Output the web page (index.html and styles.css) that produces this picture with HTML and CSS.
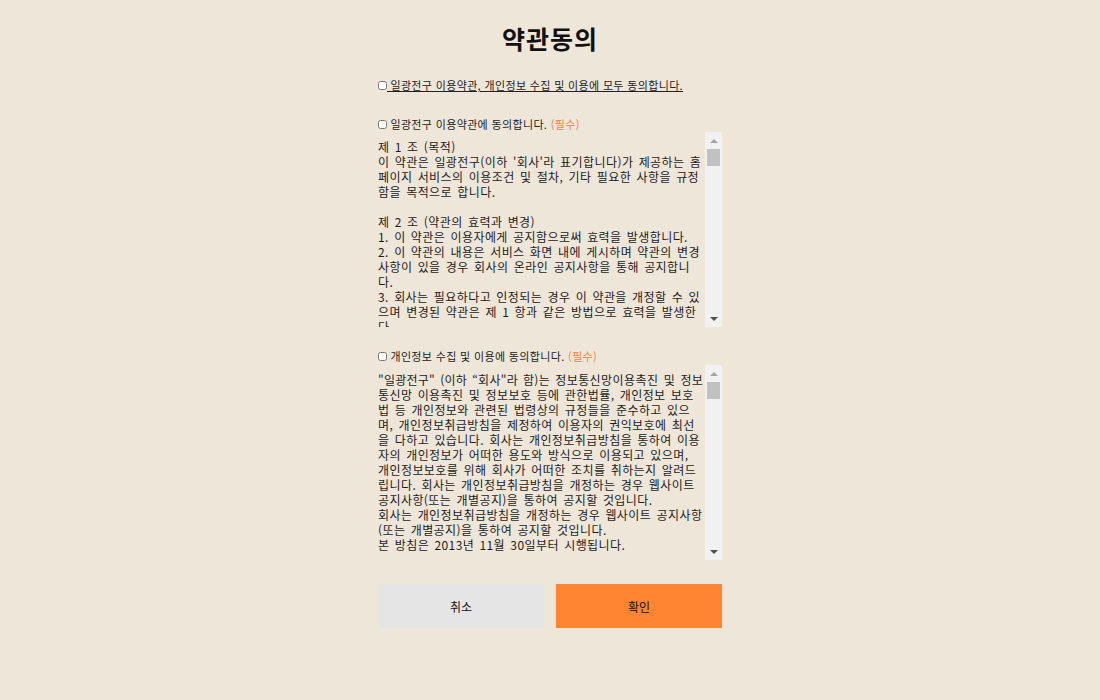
FILE: index.html
```html
<!DOCTYPE html>
<html lang="ko">
<head>
<meta charset="utf-8">
<title>약관동의</title>
<link rel="stylesheet" href="styles.css">
</head>
<body>
<div class="wrap">
  <h1 class="title">약관동의</h1>

  <label class="check all"><input type="checkbox"><span class="ul">&nbsp;일광전구 이용약관, 개인정보 수집 및 이용에 모두 동의합니다.</span></label>

  <label class="check row2"><input type="checkbox"><span>&nbsp;일광전구 이용약관에 동의합니다. <em class="req">(필수)</em></span></label>
  <div class="box">
    <div class="terms">제 1 조 (목적)
이 약관은 일광전구(이하 '회사'라 표기합니다)가 제공하는 홈페이지 서비스의 이용조건 및 절차, 기타 필요한 사항을 규정함을 목적으로 합니다.

제 2 조 (약관의 효력과 변경)
1. 이 약관은 이용자에게 공지함으로써 효력을 발생합니다.
2. 이 약관의 내용은 서비스 화면 내에 게시하며 약관의 변경사항이 있을 경우 회사의 온라인 공지사항을 통해 공지합니다.
3. 회사는 필요하다고 인정되는 경우 이 약관을 개정할 수 있으며 변경된 약관은 제 1 항과 같은 방법으로 효력을 발생한다.

제 3 조 (약관 외 준칙)
이 약관에 명시되지 않은 사항은 관계법령 및 서비스별 안내의 규정에 따릅니다.</div>
    <div class="sb" aria-hidden="true">
      <span class="sb-btn"><svg width="8" height="4" viewBox="0 0 8 4"><polygon points="0,4 8,4 4,0" fill="#a3a3a3"/></svg></span>
      <span class="sb-track"><span class="sb-thumb"></span></span>
      <span class="sb-btn"><svg width="8" height="4" viewBox="0 0 8 4"><polygon points="0,0 8,0 4,4" fill="#505050"/></svg></span>
    </div>
  </div>

  <label class="check row3"><input type="checkbox"><span>&nbsp;개인정보 수집 및 이용에 동의합니다. <em class="req">(필수)</em></span></label>
  <div class="box">
    <div class="terms"><span class="lead">"일광전구" (이하 “회사"라 함)는</span> 정보통신망이용촉진 및 정보통신망 이용촉진 및 정보보호 등에 관한법률, 개인정보 보호법 등 개인정보와 관련된 법령상의 규정들을 준수하고 있으며, 개인정보취급방침을 제정하여 이용자의 권익보호에 최선을 다하고 있습니다. 회사는 개인정보취급방침을 통하여 이용자의 개인정보가 어떠한 용도와 방식으로 이용되고 있으며, 개인정보보호를 위해 회사가 어떠한 조치를 취하는지 알려드립니다. 회사는 개인정보취급방침을 개정하는 경우 웹사이트 공지사항(또는 개별공지)을 통하여 공지할 것입니다.
회사는 개인정보취급방침을 개정하는 경우 웹사이트 공지사항(또는 개별공지)을 통하여 공지할 것입니다.
본 방침은 2013년 11월 30일부터 시행됩니다.

1. 수집하는 개인정보 항목</div>
    <div class="sb" aria-hidden="true">
      <span class="sb-btn"><svg width="8" height="4" viewBox="0 0 8 4"><polygon points="0,4 8,4 4,0" fill="#a3a3a3"/></svg></span>
      <span class="sb-track"><span class="sb-thumb"></span></span>
      <span class="sb-btn"><svg width="8" height="4" viewBox="0 0 8 4"><polygon points="0,0 8,0 4,4" fill="#505050"/></svg></span>
    </div>
  </div>

  <div class="buttons">
    <button type="button" class="btn cancel">취소</button>
    <button type="button" class="btn ok">확인</button>
  </div>
</div>
</body>
</html>
```

FILE: styles.css
```css
html, body {
  margin: 0;
  padding: 0;
  background: #efe6da;
}
body {
  font-family: "Noto Sans CJK KR", "Noto Sans", sans-serif;
  color: #222;
}
.wrap {
  width: 344px;
  margin: 0 auto;
  padding-top: 20px;
}
.title {
  margin: 0;
  font-size: 25px;
  line-height: 36px;
  font-weight: 700;
  letter-spacing: 1px;
  text-align: center;
  color: #111;
}
.check {
  display: flex;
  align-items: center;
  height: 16px;
  font-size: 11px;
  line-height: 16px;
  letter-spacing: 0.35px;
  color: #222;
  white-space: nowrap;
}
.check input {
  width: 9px;
  height: 9px;
  margin: 0;
  flex: none;
}
.check .ul {
  text-decoration: underline;
}
.req {
  font-style: normal;
  color: #f5803e;
}
.all { margin-top: 21px; }
.row2 { margin-top: 23px; }
.row3 { margin-top: 21px; margin-bottom: 1px; }
.box {
  display: flex;
  height: 195px;
}
.terms {
  flex: 1;
  min-width: 0;
  box-sizing: border-box;
  padding: 7px 0 0 0;
  overflow: hidden;
  white-space: pre-line;
  font-size: 12px;
  line-height: 15px;
  letter-spacing: 0.42px;
  word-spacing: 1.5px;
  color: #1c1c1c;
}
.terms .lead {
  letter-spacing: 0.25px;
}
.sb {
  flex: none;
  width: 17px;
  display: flex;
  flex-direction: column;
  background: #f1f1f1;
}
.sb-btn {
  flex: none;
  height: 17px;
  display: flex;
  align-items: center;
  justify-content: center;
}
.sb-track {
  flex: 1;
  padding: 0 2px;
}
.sb-thumb {
  display: block;
  height: 17px;
  background: #c1c1c1;
}
.buttons {
  display: flex;
  gap: 12px;
  margin-top: 24px;
}
.btn {
  flex: 1;
  height: 44px;
  border: 0;
  margin: 0;
  padding: 0;
  font-family: "Noto Sans CJK KR", "Noto Sans", sans-serif;
  font-size: 12px;
  color: #111;
}
.cancel { background: #e5e5e5; }
.ok { background: #ff8533; }
```
